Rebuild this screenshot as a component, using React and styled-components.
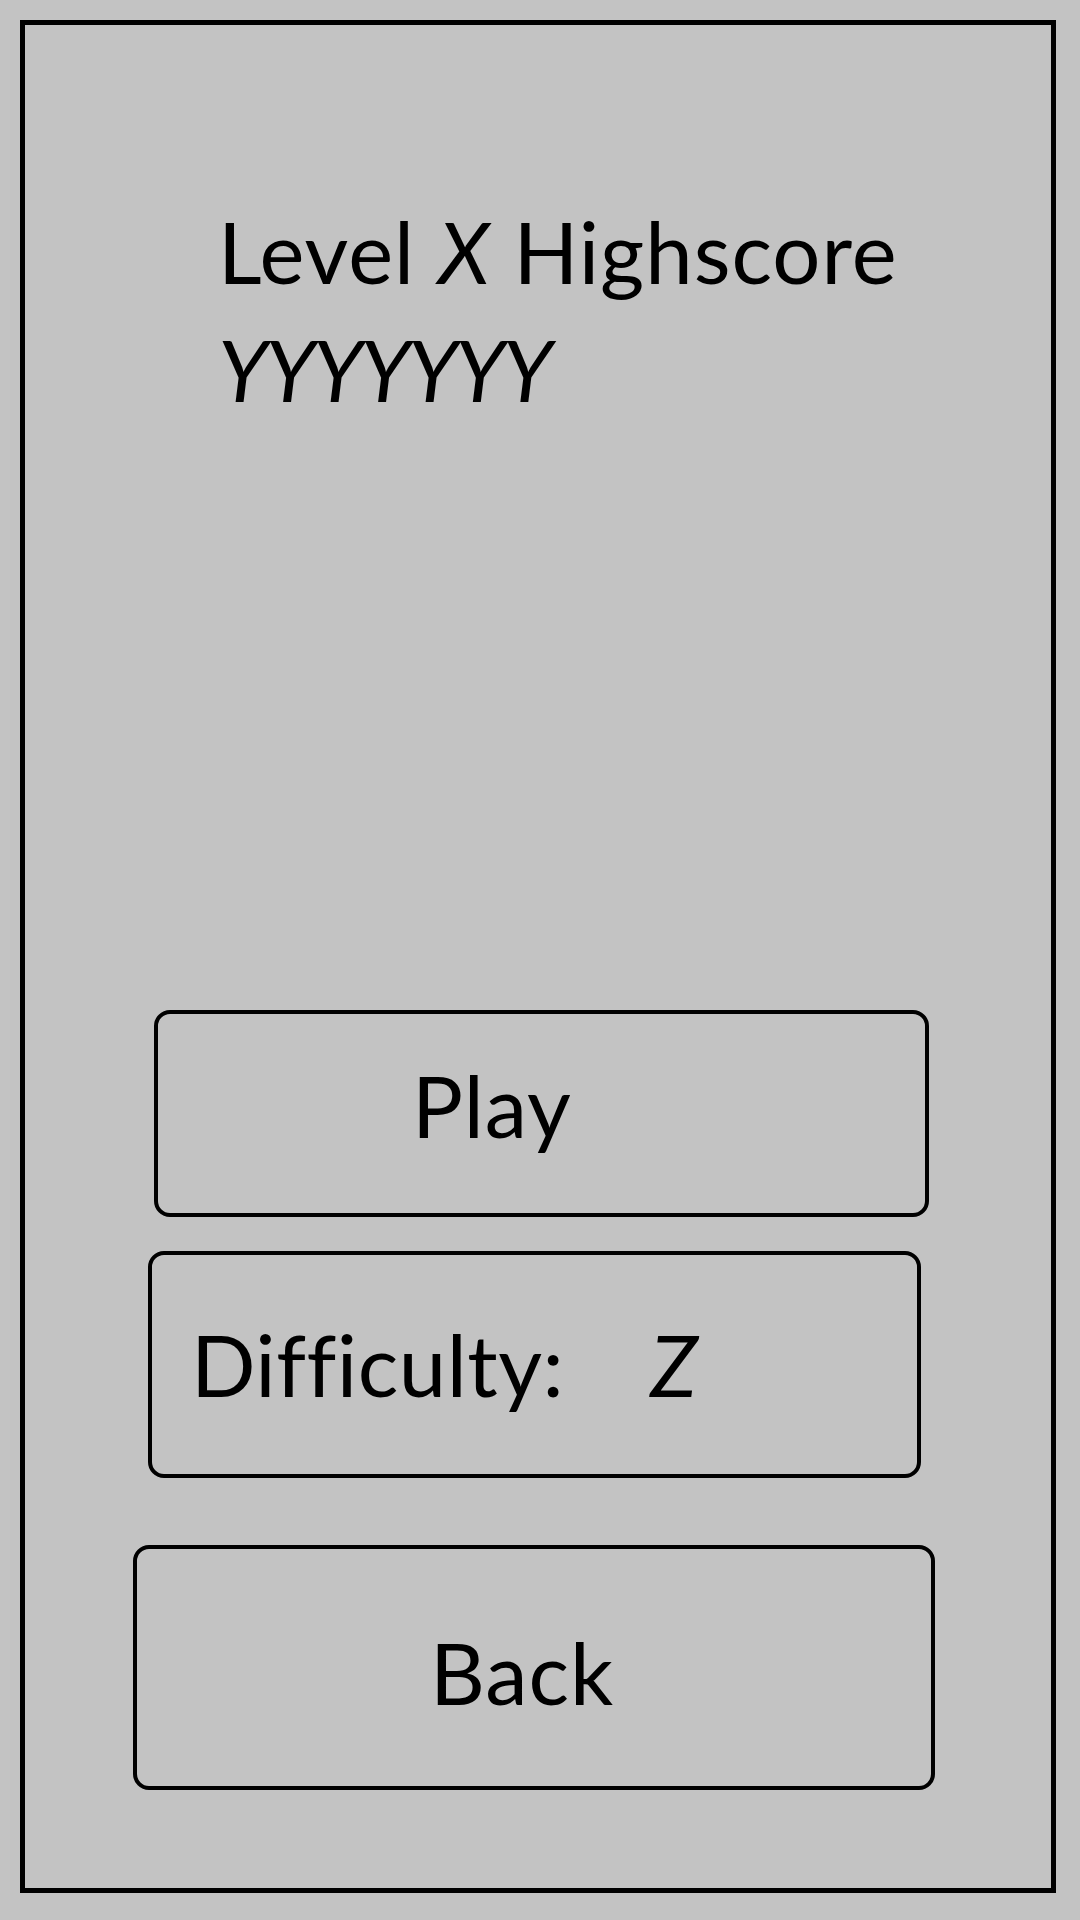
import React from "react";
import styled, { createGlobalStyle } from "styled-components";

const GlobalStyle = createGlobalStyle`
  html, body {
    margin: 0;
    padding: 0;
    background: #c3c3c3;
  }
  body {
    font-family: Lato, "Open Sans", sans-serif;
    color: #000;
  }
`;

export default function App() {
  return (
    <>
      <GlobalStyle />
      <Frame>
        <Heading>
          <Line>
            Level <em>X</em> Highscore
          </Line>
          <Line $tight>
            <em>YYYYYYY</em>
          </Line>
        </Heading>
        <Menu>
          <MenuButton $offset={129} $width={775} $height={207} $textLeft={254} $nudge={-17}>
            Play
          </MenuButton>
          <MenuButton
            $offset={123}
            $width={773}
            $height={227}
            $textLeft={39}
            $nudge={0}
            $gap={34}
            $spacing={0.5}
          >
            Difficulty:
            <Value>Z</Value>
          </MenuButton>
          <MenuButton $offset={108} $width={802} $height={245} $textLeft={293} $nudge={9} $gap={67}>
            Back
          </MenuButton>
        </Menu>
      </Frame>
    </>
  );
}

const Frame = styled.div`
  box-sizing: border-box;
  margin: 20px 0 0 20px;
  width: 1036px;
  height: 1873px;
  border: 5px solid #000;
  display: flex;
  flex-direction: column;
  padding: 167px 0 98px 193px;
`;

const Heading = styled.div`
  font-size: 85px;
  line-height: 118px;
  em {
    font-style: italic;
  }
`;

const Line = styled.div`
  white-space: nowrap;
  letter-spacing: ${(p) => (p.$tight ? "-2px" : "1px")};
`;

const Menu = styled.div`
  margin-top: auto;
  margin-left: -193px;
  display: flex;
  flex-direction: column;
`;

const MenuButton = styled.div`
  box-sizing: border-box;
  margin-left: ${(p) => p.$offset}px;
  margin-top: ${(p) => p.$gap || 0}px;
  width: ${(p) => p.$width}px;
  height: ${(p) => p.$height}px;
  border: 4.5px solid #000;
  border-radius: 16px;
  display: flex;
  align-items: center;
  padding-left: ${(p) => p.$textLeft}px;
  padding-top: ${(p) => (p.$nudge > 0 ? p.$nudge : 0)}px;
  padding-bottom: ${(p) => (p.$nudge < 0 ? -p.$nudge : 0)}px;
  font-size: 85px;
  line-height: 1;
  letter-spacing: ${(p) => p.$spacing ?? 1}px;
  white-space: nowrap;
`;

const Value = styled.span`
  font-style: italic;
  margin-left: 86px;
`;
